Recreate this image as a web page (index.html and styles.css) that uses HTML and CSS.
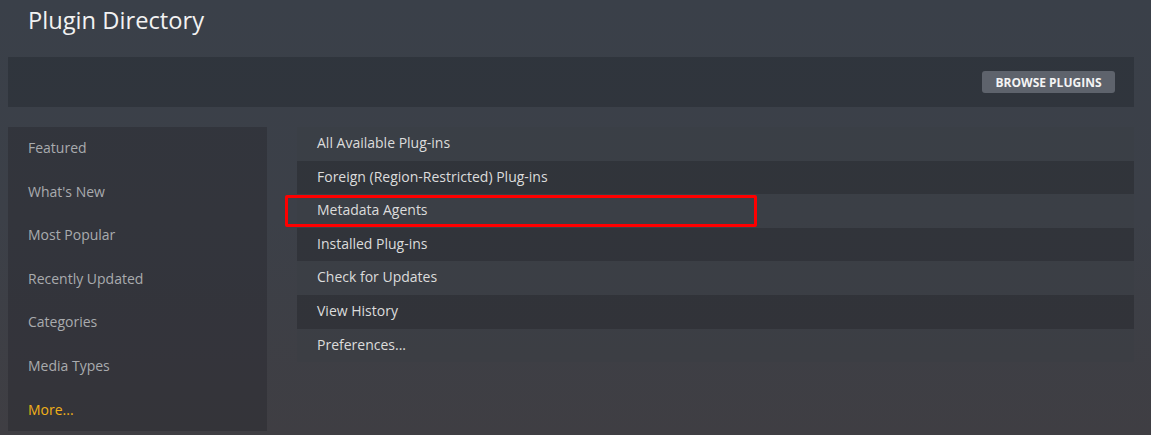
FILE: index.html
```html
<!DOCTYPE html>
<html lang="en">
<head>
    <meta charset="UTF-8">
    <meta name="viewport" content="width=device-width, initial-scale=1.0">
    <title>Plugin Directory</title>
    <link rel="stylesheet" href="styles.css">
</head>
<body>
    <main>
        <h1 class="title">Plugin Directory</h1>

        <div class="toolbar">
            <button class="browse">Browse Plugins</button>
        </div>

        <section class="content">
            <ul class="sidebar">
                <li>Featured</li>
                <li>What's New</li>
                <li>Most Popular</li>
                <li>Recently Updated</li>
                <li>Categories</li>
                <li>Media Types</li>
                <li class="more">More...</li>
            </ul>

            <ul class="list">
                <li>All Available Plug-ins</li>
                <li>Foreign (Region-Restricted) Plug-ins</li>
                <li class="marked">Metadata Agents<span class="highlight"></span></li>
                <li>Installed Plug-ins</li>
                <li>Check for Updates</li>
                <li>View History</li>
                <li>Preferences...</li>
            </ul>
        </section>
    </main>
</body>
</html>
```

FILE: styles.css
```css
html, body{
    margin: 0;
    padding: 0;
    height: 100%;
}
body{
    background: linear-gradient(to bottom, #3a4049 0%, #3c4048 50%, #3f3e43 100%);
    font-family: "Open Sans", "Noto Sans", sans-serif;
    color: #ddd;
    overflow: hidden;
}
main{
    padding: 0 17px 0 8px;
}
.title{
    margin: 0;
    padding: 4px 0 0 20px;
    height: 57px;
    box-sizing: border-box;
    font-size: 23.7px;
    font-weight: 400;
    line-height: 32px;
    color: #f2f2f2;
}
.toolbar{
    height: 50px;
    background: rgba(36, 40, 46, 0.45);
    display: flex;
    align-items: center;
    justify-content: flex-end;
    padding-right: 19px;
}
.browse{
    height: 22px;
    width: 133px;
    border: 0;
    border-radius: 3px;
    background: #5e636c;
    color: #f4f4f4;
    font-family: "Open Sans", "Noto Sans", sans-serif;
    font-size: 12px;
    font-weight: 700;
    text-transform: uppercase;
    padding: 0;
}
.content{
    display: flex;
    margin-top: 20px;
    gap: 30px;
}
ul{
    list-style: none;
    margin: 0;
    padding: 0;
}
.sidebar{
    width: 259px;
    height: 304px;
    background: rgba(40, 40, 46, 0.45);
    box-sizing: border-box;
}
.sidebar li{
    height: 43.6px;
    line-height: 41px;
    padding-left: 20px;
    font-size: 14px;
    color: #a9abae;
}
.sidebar li.more{
    color: #f0b018;
}
.list{
    flex: 1;
}
.list li{
    position: relative;
    height: 33.6px;
    line-height: 32px;
    padding-left: 20px;
    font-size: 14px;
    color: #dcdcdc;
    background: rgba(58, 61, 68, 0.5);
}
.list li:nth-child(even){
    background: rgba(40, 42, 47, 0.55);
}
.highlight{
    position: absolute;
    left: -12px;
    top: 1px;
    width: 466px;
    height: 26px;
    border: 3px solid #f00;
    border-radius: 2px;
}
```
